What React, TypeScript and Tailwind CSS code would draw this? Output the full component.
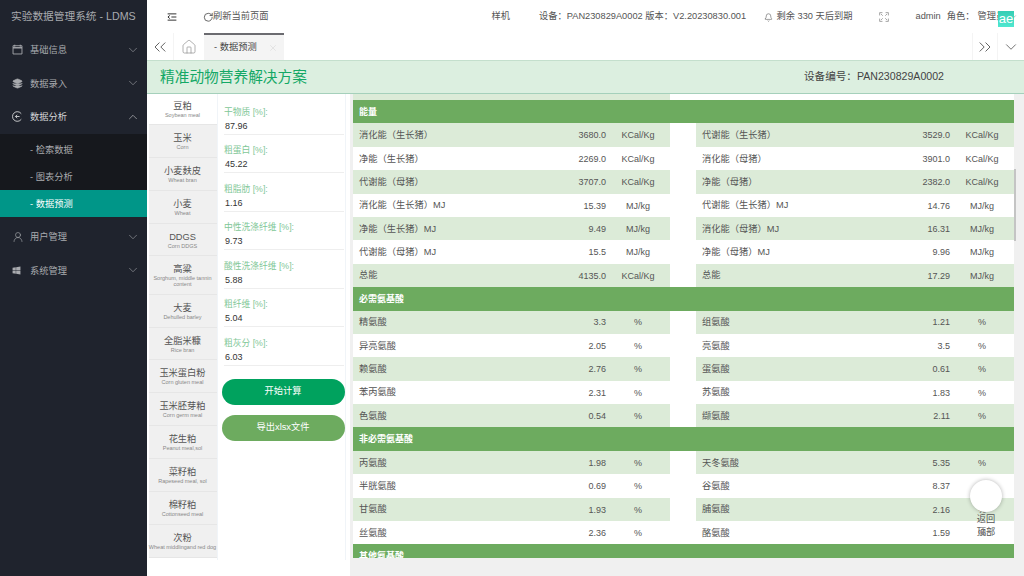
import { Bell, ChevronDown, ChevronUp, ChevronsLeft, ChevronsRight, House, Layers, RotateCw, UserRound, X } from "lucide-react";
import { FaWindows } from "react-icons/fa";

const font = "font-['Liberation_Sans','Noto_Sans_CJK_SC',sans-serif]";

const feeds = [
  { zh: "豆粕", en: ["Soybean meal"], h: "h-[31px]", active: true },
  { zh: "玉米", en: ["Corn"], h: "h-[33px]" },
  { zh: "小麦麸皮", en: ["Wheat bran"], h: "h-[33px]" },
  { zh: "小麦", en: ["Wheat"], h: "h-[33px]" },
  { zh: "DDGS", en: ["Corn DDGS"], h: "h-[32px]" },
  { zh: "高粱", en: ["Sorghum, middle tannin", "content"], h: "h-[39px]" },
  { zh: "大麦", en: ["Dehulled barley"], h: "h-[33px]" },
  { zh: "全脂米糠", en: ["Rice bran"], h: "h-[32px]" },
  { zh: "玉米蛋白粉", en: ["Corn gluten meal"], h: "h-[33px]" },
  { zh: "玉米胚芽粕", en: ["Corn germ meal"], h: "h-[33px]" },
  { zh: "花生粕", en: ["Peanut meal,sol"], h: "h-[33px]" },
  { zh: "菜籽粕", en: ["Rapeseed meal, sol"], h: "h-[33px]" },
  { zh: "棉籽粕", en: ["Cottonseed meal"], h: "h-[33px]" },
  { zh: "次粉", en: ["Wheat middlingand red dog"], h: "h-[33px]" },
];

const inputs = [
  ["干物质 [%]:", "87.96"],
  ["粗蛋白 [%]:", "45.22"],
  ["粗脂肪 [%]:", "1.16"],
  ["中性洗涤纤维 [%]:", "9.73"],
  ["酸性洗涤纤维 [%]:", "5.88"],
  ["粗纤维 [%]:", "5.04"],
  ["粗灰分 [%]:", "6.03"],
];

type Row = [string, string, string];

const sections: { title: string; rows: [Row, Row][] }[] = [
  {
    title: "能量",
    rows: [
      [["消化能（生长猪）", "3680.0", "KCal/Kg"], ["代谢能（生长猪）", "3529.0", "KCal/Kg"]],
      [["净能（生长猪）", "2269.0", "KCal/Kg"], ["消化能（母猪）", "3901.0", "KCal/Kg"]],
      [["代谢能（母猪）", "3707.0", "KCal/Kg"], ["净能（母猪）", "2382.0", "KCal/Kg"]],
      [["消化能（生长猪）MJ", "15.39", "MJ/kg"], ["代谢能（生长猪）MJ", "14.76", "MJ/kg"]],
      [["净能（生长猪）MJ", "9.49", "MJ/kg"], ["消化能（母猪）MJ", "16.31", "MJ/kg"]],
      [["代谢能（母猪）MJ", "15.5", "MJ/kg"], ["净能（母猪）MJ", "9.96", "MJ/kg"]],
      [["总能", "4135.0", "KCal/Kg"], ["总能", "17.29", "MJ/kg"]],
    ],
  },
  {
    title: "必需氨基酸",
    rows: [
      [["精氨酸", "3.3", "%"], ["组氨酸", "1.21", "%"]],
      [["异亮氨酸", "2.05", "%"], ["亮氨酸", "3.5", "%"]],
      [["赖氨酸", "2.76", "%"], ["蛋氨酸", "0.61", "%"]],
      [["苯丙氨酸", "2.31", "%"], ["苏氨酸", "1.83", "%"]],
      [["色氨酸", "0.54", "%"], ["缬氨酸", "2.11", "%"]],
    ],
  },
  {
    title: "非必需氨基酸",
    rows: [
      [["丙氨酸", "1.98", "%"], ["天冬氨酸", "5.35", "%"]],
      [["半胱氨酸", "0.69", "%"], ["谷氨酸", "8.37", "%"]],
      [["甘氨酸", "1.93", "%"], ["脯氨酸", "2.16", "%"]],
      [["丝氨酸", "2.36", "%"], ["酪氨酸", "1.59", "%"]],
    ],
  },
  { title: "其他氨基酸", rows: [] },
];

function CalendarIcon() {
  return (
    <svg width="11" height="11" viewBox="0 0 16 16" fill="none" stroke="currentColor" strokeWidth="1.3">
      <path d="M1.5 2.5h13v12h-13zM4 1v3M12 1v3" />
      <path d="M1.5 5.5h13" strokeWidth="2" />
    </svg>
  );
}

function AnalysisIcon() {
  return (
    <svg width="11" height="11" viewBox="0 0 16 16" fill="none" stroke="currentColor" strokeWidth="1.3">
      <path d="M13.5 4A7 7 0 1 0 13.5 12M5 8h6M7.5 5.5 5 8l2.5 2.5" />
    </svg>
  );
}

function MenuItem({ icon, label, open }: { icon: React.ReactNode; label: string; open?: boolean }) {
  return (
    <div className={`flex h-[33.5px] items-center pl-[12px] pr-[7px] text-[9.25px] ${open ? "text-[#d5d6d8]" : "text-[#a9abaf]"}`}>
      <span className="flex w-[18px] items-center">{icon}</span>
      <span className="flex-1 pt-[3px]">{label}</span>
      {open ? <ChevronUp size={14} strokeWidth={1} /> : <ChevronDown size={14} strokeWidth={1} />}
    </div>
  );
}

function Sidebar() {
  return (
    <aside className="flex w-[147px] shrink-0 flex-col bg-[#1f232d]">
      <div className="flex h-[33px] items-center pl-[11px] text-[10.7px] text-[#a9abaf]">实验数据管理系统 - LDMS</div>
      <MenuItem icon={<CalendarIcon />} label="基础信息" />
      <MenuItem icon={<Layers size={11} strokeWidth={1.5} fill="currentColor" />} label="数据录入" />
      <MenuItem icon={<AnalysisIcon />} label="数据分析" open />
      <div className="flex flex-col bg-[#16181d] text-[9.25px] text-[#a9abaf]">
        <div className="flex h-[29.5px] items-center pl-[30px] pt-[6px]">- 检索数据</div>
        <div className="flex h-[27px] items-center pl-[30px] pt-[2px]">- 图表分析</div>
        <div className="flex h-[27px] items-center bg-[#009688] pl-[30px] pt-[2px] text-white">- 数据预测</div>
      </div>
      <div className="h-[3px]" />
      <MenuItem icon={<UserRound size={12} strokeWidth={1.25} />} label="用户管理" />
      <MenuItem icon={<FaWindows size={9} />} label="系统管理" />
    </aside>
  );
}

function OutdentIcon() {
  return (
    <svg width="10" height="10" viewBox="0 0 16 16" fill="none" stroke="#333" strokeWidth="1.6" className="ml-[19.5px] shrink-0">
      <path d="M1 3h14M7 8h8M1 13h14M4.5 5.5 1.5 8l3 2.5" />
    </svg>
  );
}

function FullscreenIcon() {
  return (
    <svg width="10" height="10" viewBox="0 0 16 16" fill="none" stroke="#999" strokeWidth="1.4" className="ml-[26.5px] shrink-0">
      <path d="M1 5.5V1h4.5M10.5 1H15v4.5M15 10.5V15h-4.5M5.5 15H1v-4.5M3 3l3 3M13 3l-3 3M3 13l3-3M13 13l-3-3" />
    </svg>
  );
}

function Header() {
  return (
    <header className="flex h-[33px] shrink-0 items-center overflow-hidden whitespace-nowrap bg-white pt-[1px] text-[9.25px] text-[#555]">
      <OutdentIcon />
      <RotateCw size={10.5} strokeWidth={2} className="ml-[26px] shrink-0" />
      <span className="w-[62px] shrink-0">刷新当前页面</span>
      <span className="ml-[216.5px]">样机</span>
      <span className="ml-[29px] w-[208px] shrink-0">设备：PAN230829A0002 版本：V2.20230830.001</span>
      <Bell size={9} strokeWidth={1.5} className="ml-[17px] shrink-0" />
      <span className="ml-[3.5px] w-[76px] shrink-0">剩余 330 天后到期</span>
      <FullscreenIcon />
      <span className="ml-[26.5px]">admin</span>
      <span className="ml-[6px]">角色：</span>
      <span className="ml-[3px]">管理员</span>
      <ChevronDown size={10} strokeWidth={1} className="ml-[3px] shrink-0" />
    </header>
  );
}

function Tabs() {
  return (
    <div className="flex h-[27px] shrink-0 items-stretch bg-white text-[9.25px] text-[#444]">
      <div className="flex w-[27px] items-center justify-center border-r border-[#f4f4f4]">
        <ChevronsLeft size={20} strokeWidth={1} />
      </div>
      <div className="flex w-[30px] items-center justify-center">
        <House size={16} strokeWidth={1} className="text-[#888]" />
      </div>
      <div className="flex w-[80px] items-center justify-between border-t-2 border-[#6b6b70] bg-[#f4f4f4] pl-[10px] pr-[6px]">
        <span>- 数据预测</span>
        <X size={10} strokeWidth={1} className="text-[#ccc]" />
      </div>
      <div className="flex-1" />
      <div className="flex w-[25px] items-center justify-center border-l border-[#f4f4f4]">
        <ChevronsRight size={20} strokeWidth={1} />
      </div>
      <div className="flex w-[27px] items-center justify-center border-l border-[#f4f4f4]">
        <ChevronDown size={18} strokeWidth={1} />
      </div>
    </div>
  );
}

function Banner() {
  return (
    <div className="flex h-[34px] shrink-0 items-center border-y border-y-[#c4dfcd] border-b-[#a5d0bb] bg-[#dcefe0] pl-[13px] whitespace-nowrap">
      <span className="w-[147px] text-[14.7px] text-[#14a866]">精准动物营养解决方案</span>
      <span className="ml-[497px] text-[10.6px] text-[#444]">设备编号：PAN230829A0002</span>
    </div>
  );
}

function FeedList() {
  return (
    <div className="flex w-[69.5px] shrink-0 flex-col pl-[1.5px]">
      {feeds.map((f) => (
        <div
          key={f.zh}
          className={`flex ${f.h} flex-col items-center justify-center border-b border-[#e6e6e6] pt-[1px] text-center ${f.active ? "bg-white" : "bg-[#f0f0f0]"}`}
        >
          <div className="text-[9.25px] leading-[11px] text-[#555]">{f.zh}</div>
          {f.en.map((line) => (
            <div key={line} className="text-[5.5px] leading-[6px] whitespace-nowrap text-[#888]">
              {line}
            </div>
          ))}
        </div>
      ))}
    </div>
  );
}

function InputPanel() {
  return (
    <div className="w-[133.5px] shrink-0 pr-[4px]">
      <div className="flex h-[466px] flex-col border-x border-[#f0f4f8] pl-[6.5px] pr-[1px] pt-[11px]">
        {inputs.map(([label, value]) => (
          <div key={label} className="mb-[8.9px] h-[29.6px] border-b border-[#eeeeee]">
            <div className="h-[15px] text-[8.75px] leading-[15px] whitespace-nowrap text-[#7fc797]">{label}</div>
            <div className="pl-[1px] text-[9px] leading-[13px] text-[#333]">{value}</div>
          </div>
        ))}
        <div className="mt-[4.5px] flex flex-col gap-[10px]">
          <button className="-ml-[2.5px] h-[26px] w-[123px] rounded-full bg-[#00a25e] text-[9.25px] text-white">开始计算</button>
          <button className="-ml-[2.5px] h-[26px] w-[123px] rounded-full bg-[#6dab5f] text-[9.25px] text-white">导出xlsx文件</button>
        </div>
      </div>
    </div>
  );
}

function Cell({ row, shade, width }: { row: Row; shade: boolean; width: string }) {
  return (
    <div className={`flex h-full ${width} items-center pl-[6px] pt-[2px] ${shade ? "bg-[#dcebd8]" : "bg-white"}`}>
      <span className="flex-1 text-[9.25px] whitespace-nowrap">{row[0]}</span>
      <span className="w-[60px] text-right">{row[1]}</span>
      <span className="w-[64px] text-center">{row[2]}</span>
    </div>
  );
}

function DataTable() {
  return (
    <div className="ml-[3px] h-[464px] w-[661px] shrink-0 overflow-hidden bg-white text-[9px] text-[#555]">
      <div className="h-[6px] w-[317px] bg-[#dcebd8]" />
      {sections.map((s) => (
        <div key={s.title}>
          <div className="flex h-[23.4px] items-center bg-[#6dab5f] pl-[6px] pt-[2px] font-bold text-white">{s.title}</div>
          {s.rows.map((r, i) => (
            <div key={r[0][0]} className="flex h-[23.4px] justify-between">
              <Cell row={r[0]} shade={i % 2 === 0} width="w-[317px]" />
              <Cell row={r[1]} shade={i % 2 === 0} width="w-[318px]" />
            </div>
          ))}
        </div>
      ))}
    </div>
  );
}

export default function App() {
  return (
    <div className={`relative flex h-[576px] w-[1024px] overflow-hidden bg-[#f0f0f0] ${font}`}>
      <Sidebar />
      <main className="flex min-w-0 flex-1 flex-col">
        <Header />
        <Tabs />
        <Banner />
        <div className="flex min-h-0 flex-1">
          <div className="flex bg-white">
            <FeedList />
            <InputPanel />
          </div>
          <DataTable />
        </div>
      </main>
      {/* scrollbar thumb, float button and ae badge sit over the page */}
      <div className="absolute left-[1014px] top-[169px] h-[72px] w-[2px] bg-[#c4c4c4]" />
      <div className="absolute left-[998px] top-[11px] flex h-[16px] w-[16px] items-center justify-center bg-linear-to-b from-[#35cdb4] to-[#4fe8d0] text-[13px] text-white">ae</div>
      <div className="absolute left-[970px] top-[480px] flex w-[32px] flex-col items-center">
        <div className="h-[32px] w-[32px] rounded-full bg-white shadow-[0_0_4px_rgba(0,0,0,0.3)]" />
        <div className="mt-[1px] w-[20px] text-center text-[9.25px] leading-[13px] text-[#555]">返回顶部</div>
      </div>
    </div>
  );
}
